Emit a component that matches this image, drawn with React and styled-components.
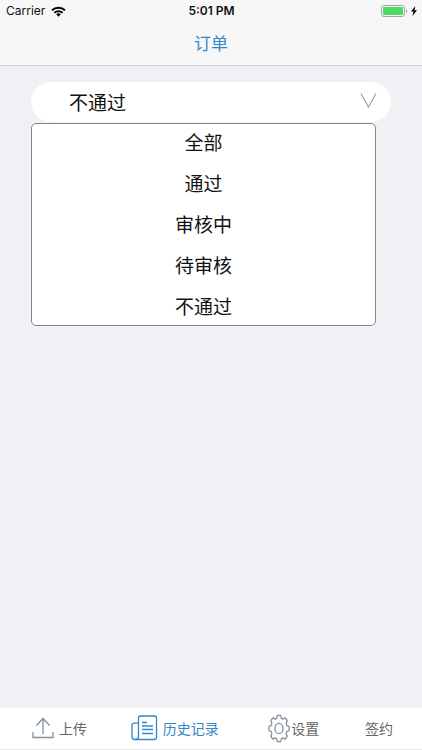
import React, { useState } from 'react';
import styled, { createGlobalStyle } from 'styled-components';

const GlobalStyle = createGlobalStyle`
  * { box-sizing: border-box; }
  body {
    margin: 0;
    background: #f0f1f4;
    font-family: "Noto Sans CJK SC", sans-serif;
    color: #111;
  }
  button { font: inherit; color: inherit; border: 0; padding: 0; background: none; cursor: pointer; }
`;

const Screen = styled.div`
  min-height: 100vh;
  display: flex;
  flex-direction: column;
`;

const Header = styled.header`
  background: #f7f7f7;
  border-bottom: 1px solid #d3d4d6;
`;

const StatusBar = styled.div`
  display: grid;
  grid-template-columns: 1fr auto 1fr;
  align-items: center;
  height: 22px;
  padding: 0 5px 0 6px;
  font-family: Inter, sans-serif;
  font-size: 12px;
  line-height: 22px;
`;

const StatusGroup = styled.div`
  display: flex;
  align-items: center;
  justify-content: ${(p) => (p.$end ? 'flex-end' : 'flex-start')};
  gap: ${(p) => (p.$end ? 3 : 6)}px;
`;

const Clock = styled.time`
  font-weight: 600;
`;

const Title = styled.h1`
  margin: 0;
  height: 43px;
  line-height: 42px;
  text-align: center;
  font-size: 17px;
  font-weight: 400;
  color: #3487c9;
`;

const Main = styled.main`
  flex: 1;
  padding: 16px 31px;
`;

const Dropdown = styled.div`
  position: relative;
`;

const Trigger = styled.button`
  display: flex;
  align-items: center;
  justify-content: space-between;
  width: 100%;
  height: 40px;
  padding: 0 14px 0 38px;
  border-radius: 20px;
  background: #fff;
  font-size: 19px;
  line-height: 40px;
`;

const Chevron = styled.svg`
  margin-bottom: 4px;
`;

const Menu = styled.ul`
  position: absolute;
  top: 100%;
  left: 0;
  right: 15px;
  display: grid;
  gap: 4px;
  margin: 1px 0 0;
  padding: 0;
  list-style: none;
  background: #fff;
  border: 1px solid #85878a;
  border-radius: 5px;
`;

const Option = styled.button`
  display: block;
  width: 100%;
  height: 37px;
  padding-bottom: 2px;
  line-height: 35px;
  font-size: 19px;
  text-align: center;
`;

const TabBar = styled.nav`
  display: flex;
  justify-content: space-between;
  height: 42px;
  padding: 0 29px 1px 32px;
  background: #fff;
  border-bottom: 1px solid #e9eaec;
`;

const Tab = styled.button`
  display: flex;
  align-items: center;
  gap: ${(p) => p.$gap || 0}px;
  padding-right: ${(p) => p.$endSpace || 0}px;
  font-size: 14px;
  line-height: 40px;
  color: ${(p) => (p.$active ? '#3487c9' : '#666')};
`;

const WifiIcon = () => (
  <svg width="15" height="11" viewBox="0 0 15 11" fill="none" stroke="#000" strokeWidth="2" aria-hidden="true">
    <path d="M1 4.3a9.4 9.4 0 0 1 13 0" />
    <path d="M3.4 6.9a5.9 5.9 0 0 1 8.2 0" />
    <path d="M5.2 8.3a3.4 3.4 0 0 1 4.6 0L7.5 10.7z" fill="#000" stroke="none" />
  </svg>
);

const BatteryIcon = () => (
  <svg width="27" height="12" viewBox="0 0 27 12" aria-hidden="true">
    <rect x=".5" y=".5" width="23" height="11" rx="2.5" fill="none" stroke="#a2a4a4" />
    <rect x="2" y="2" width="20" height="8" rx="1" fill="#4cd964" />
    <path d="M25 4v4a2.2 2.2 0 0 0 0-4z" fill="#a2a4a4" />
  </svg>
);

const BoltIcon = () => (
  <svg width="6" height="10" viewBox="0 0 6 10" aria-hidden="true">
    <path d="M4.4 0 0 5.6h2.4L1.5 10 6 4.2H3.5z" fill="#000" />
  </svg>
);

const UploadIcon = () => (
  <svg width="22" height="22" viewBox="0 0 22 22" fill="none" stroke="#82919d" strokeWidth="1.3" aria-hidden="true">
    <path d="M1 15v5.5h20V15M11 17V1.5M4.5 8.5l6.5-7 6.5 7" />
  </svg>
);

const HistoryIcon = () => (
  <svg width="27" height="26" viewBox="0 0 27 26" fill="none" stroke="#3487c9" strokeWidth="1.3" aria-hidden="true">
    <path d="M7.5 22V3.2Q7.5 1 9.7 1h13.6q2.2 0 2.2 2.2v19.1q0 2.2-2.2 2.2H3.7Q1 24.5 1 21.8V10.3Q1 8.2 3.1 8.2h4.4" />
    <path d="M7.5 21.8q0 2.7-3.2 2.7M11 7.5h5M11 11h11M11 14.5h11M11 18.5h11" />
  </svg>
);

const toothCorners = [[-17, 0.8], [-13, 0.86], [-11, 0.97], [-7, 1], [7, 1], [11, 0.97], [13, 0.86], [17, 0.8]];
const gearPoints = Array.from({ length: 8 }).flatMap((_, i) =>
  toothCorners.map(([offset, r]) => {
    const a = ((i * 45 + offset) * Math.PI) / 180;
    return `${(11 + 10.2 * r * Math.sin(a)).toFixed(2)},${(14.5 - 13.3 * r * Math.cos(a)).toFixed(2)}`;
  })
).join(' ');

const GearIcon = () => (
  <svg width="22" height="29" viewBox="0 0 22 29" fill="none" stroke="#82919d" strokeWidth="1.3" strokeLinejoin="round" aria-hidden="true">
    <polygon points={gearPoints} />
    <ellipse cx="11" cy="14.5" rx="4" ry="5.2" />
  </svg>
);

const options = ['全部', '通过', '审核中', '待审核', '不通过'];

const tabs = [
  { label: '上传', Icon: UploadIcon, gap: 5 },
  { label: '历史记录', Icon: HistoryIcon, gap: 5, endSpace: 6 },
  { label: '设置', Icon: GearIcon, gap: 1, endSpace: 2 },
  { label: '签约' },
];

export default function App() {
  const [open, setOpen] = useState(true);
  const [value, setValue] = useState('不通过');
  const [active, setActive] = useState('历史记录');

  return (
    <Screen>
      <GlobalStyle />
      <Header>
        <StatusBar>
          <StatusGroup>
            <span>Carrier</span>
            <WifiIcon />
          </StatusGroup>
          <Clock>5:01 PM</Clock>
          <StatusGroup $end>
            <BatteryIcon />
            <BoltIcon />
          </StatusGroup>
        </StatusBar>
        <Title>订单</Title>
      </Header>
      <Main>
        <Dropdown>
          <Trigger type="button" aria-haspopup="listbox" aria-expanded={open} onClick={() => setOpen(!open)}>
            <span>{value}</span>
            <Chevron width="17" height="15" viewBox="0 0 17 15" fill="none" stroke="#a0a8ae" strokeWidth="1.3" aria-hidden="true">
              <path d="M1 .5 8.5 14 16 .5" />
            </Chevron>
          </Trigger>
          {open && (
            <Menu role="listbox">
              {options.map((label) => (
                <li key={label} role="presentation">
                  <Option
                    type="button"
                    role="option"
                    aria-selected={label === value}
                    onClick={() => {
                      setValue(label);
                      setOpen(false);
                    }}
                  >
                    {label}
                  </Option>
                </li>
              ))}
            </Menu>
          )}
        </Dropdown>
      </Main>
      <TabBar>
        {tabs.map(({ label, Icon, gap, endSpace }) => (
          <Tab
            key={label}
            type="button"
            $gap={gap}
            $endSpace={endSpace}
            $active={label === active}
            onClick={() => setActive(label)}
          >
            {Icon && <Icon />}
            <span>{label}</span>
          </Tab>
        ))}
      </TabBar>
    </Screen>
  );
}
